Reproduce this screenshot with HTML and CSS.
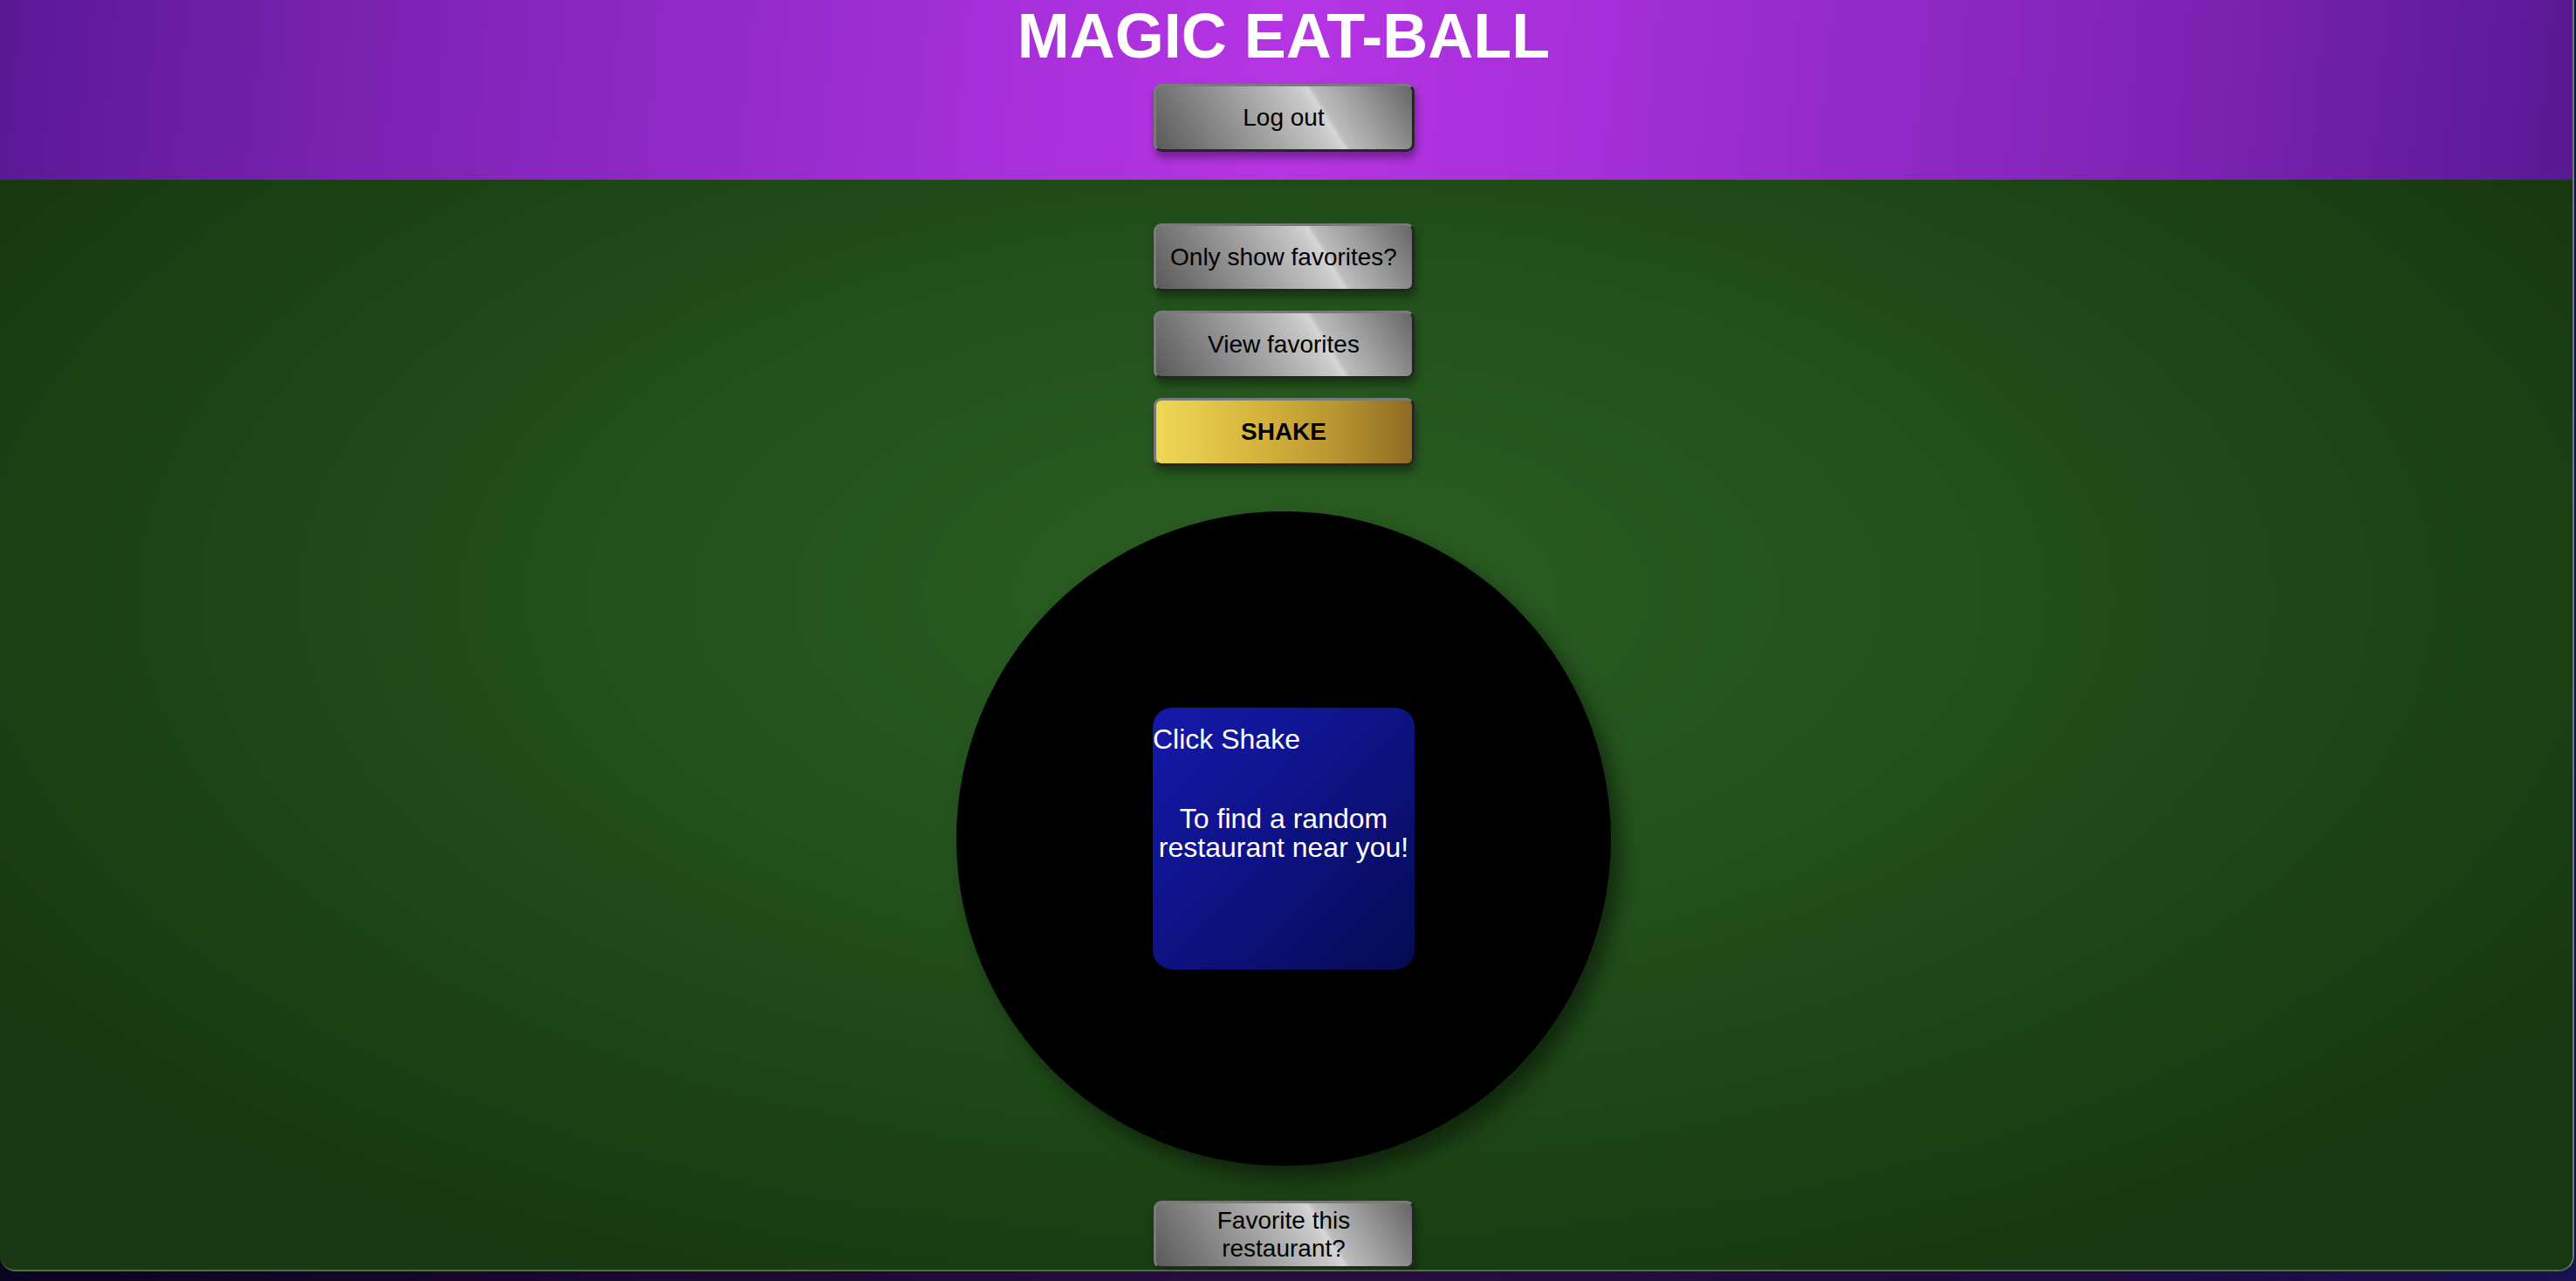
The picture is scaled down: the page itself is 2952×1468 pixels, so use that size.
FILE: index.html
```html
<!DOCTYPE html>
<html lang="en">
<head>
<meta charset="utf-8">
<title>Magic Eat-Ball</title>
<link rel="stylesheet" href="styles.css">
</head>
<body>
<div class="app">
  <header class="header">
    <h1 class="title">MAGIC EAT-BALL</h1>
    <button class="btn btn-metal">Log out</button>
  </header>
  <main class="table">
    <div class="controls">
      <button class="btn btn-metal">Only show favorites?</button>
      <button class="btn btn-metal">View favorites</button>
      <button class="btn btn-gold">SHAKE</button>
    </div>
    <div class="ball">
      <div class="window">
        <p class="window-title">Click Shake</p>
        <p class="window-text">To find a random restaurant near you!</p>
      </div>
    </div>
    <button class="btn btn-metal btn-fav">Favorite this restaurant?</button>
  </main>
</div>
</body>
</html>
```
FILE: styles.css
```css
html, body {
  margin: 0;
  padding: 0;
}
body {
  min-height: 100vh;
  background: linear-gradient(90deg, #0a0520 0%, #1c0830 25%, #2b0c42 50%, #21093d 75%, #181050 100%);
  font-family: "Liberation Sans", Arial, Helvetica, sans-serif;
}
.app {
  width: 2950px;
  border-right: 2px solid #6b7f66;
  border-bottom: 2px solid #4f6e48;
  border-radius: 0 0 18px 18px;
  overflow: hidden;
  box-sizing: border-box;
}
.header {
  height: 206px;
  box-sizing: border-box;
  padding-right: 6px;
  display: flex;
  flex-direction: column;
  align-items: center;
  background: linear-gradient(95deg, #5a1894 0%, #7a22b2 14%, #a52fd8 38%, #b535e3 50%, #a52fd8 62%, #7a22b2 86%, #581893 100%);
}
.title {
  margin: 0;
  font-size: 72px;
  font-weight: bold;
  color: #ffffff;
  line-height: normal;
}
.header .btn {
  margin-top: 14px;
}
.btn {
  width: 299px;
  height: 78px;
  box-sizing: border-box;
  display: flex;
  align-items: center;
  justify-content: center;
  text-align: center;
  font-family: "Liberation Sans", Arial, Helvetica, sans-serif;
  font-size: 28px;
  line-height: 32px;
  color: #000;
  border: 3px solid;
  border-color: #7a7a7a #262626 #262626 #7a7a7a;
  border-radius: 9px;
  box-shadow: 2px 7px 10px rgba(0, 0, 0, 0.35);
  padding: 0 6px;
  cursor: pointer;
}
.btn-metal {
  background: linear-gradient(58deg, #5a5a5a 0%, #7a7a7a 18%, #a2a2a2 40%, #c8c8c8 60%, #d6d6d6 64%, #bcbcbc 66%, #9a9a9a 80%, #666666 100%);
}
.btn-gold {
  background: linear-gradient(90deg, #efd855 0%, #d9b83f 35%, #b99630 70%, #8f6a22 100%);
  font-weight: bold;
}
.table {
  height: 1249px;
  box-sizing: border-box;
  display: flex;
  flex-direction: column;
  align-items: center;
  padding-top: 50px;
  padding-right: 6px;
  background: radial-gradient(ellipse 60% 70% at 50% 38%, #2a5e22 0%, #24521d 40%, #1c4315 75%, #173810 100%);
}
.controls {
  display: flex;
  flex-direction: column;
  align-items: center;
  gap: 22px;
}
.ball {
  margin-top: 52px;
  width: 750px;
  height: 750px;
  border-radius: 50%;
  background: #000;
  display: flex;
  align-items: center;
  justify-content: center;
  box-shadow: 12px 14px 22px rgba(0, 0, 0, 0.45);
}
.window {
  width: 300px;
  height: 300px;
  border-radius: 22px;
  background: linear-gradient(135deg, #1519ab 0%, #0e1388 45%, #060b52 100%);
  color: #fff;
  display: flex;
  flex-direction: column;
}
.window-title {
  margin: 18px 0 0 0;
  font-size: 32px;
  line-height: 36px;
  text-align: left;
}
.window-text {
  margin: 57px 0 0 0;
  font-size: 32px;
  line-height: 33px;
  text-align: center;
}
.btn-fav {
  margin-top: 40px;
}
```
